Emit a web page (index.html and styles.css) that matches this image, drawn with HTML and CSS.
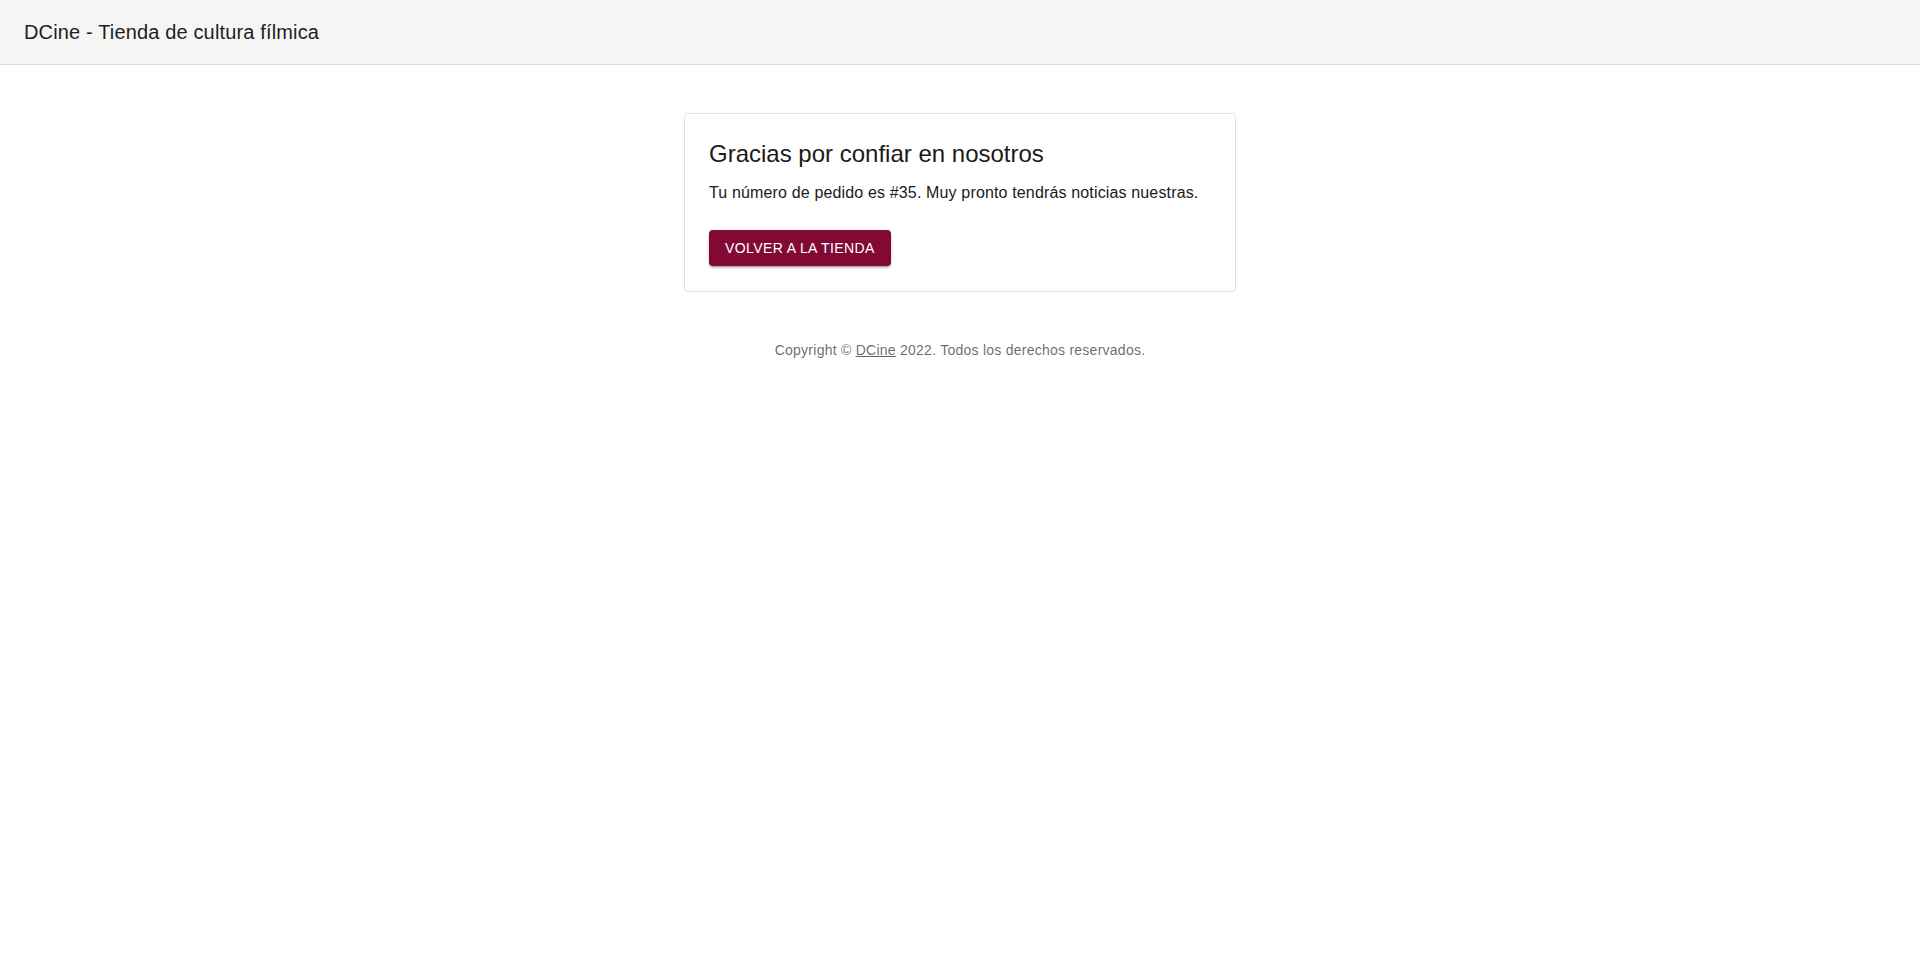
FILE: index.html
```html
<!DOCTYPE html>
<html lang="es">
<head>
<meta charset="utf-8">
<title>DCine - Tienda de cultura fílmica</title>
<link rel="stylesheet" href="styles.css">
</head>
<body>
<header class="topbar">
  <h1 class="brand">DCine - Tienda de cultura fílmica</h1>
</header>
<main class="main">
  <section class="card">
    <h2 class="card-title">Gracias por confiar en nosotros</h2>
    <p class="card-text">Tu número de pedido es #35. Muy pronto tendrás noticias nuestras.</p>
    <div class="card-actions">
      <a class="btn" href="#">Volver a la tienda</a>
    </div>
  </section>
  <footer class="footer">
    Copyright © <a class="footer-link" href="#">DCine</a> 2022. Todos los derechos reservados.
  </footer>
</main>
</body>
</html>
```

FILE: styles.css
```css
* { box-sizing: border-box; }
html, body {
  margin: 0;
  padding: 0;
  background: #ffffff;
  font-family: "Liberation Sans", Arial, sans-serif;
  color: rgba(0, 0, 0, 0.87);
}
.topbar {
  height: 65px;
  background: #f5f5f5;
  border-bottom: 1px solid #dcdcdc;
  display: flex;
  align-items: center;
  padding: 0 24px;
}
.brand {
  margin: 0;
  font-size: 20px;
  font-weight: 400;
  line-height: 32px;
  letter-spacing: 0.15px;
  color: #1e1e1e;
  padding-bottom: 1px;
}
.main {
  display: flex;
  flex-direction: column;
  align-items: center;
  padding-top: 48px;
}
.card {
  width: 552px;
  border: 1px solid #e0e0e0;
  border-radius: 4px;
  padding: 24px 24px 25px 24px;
  display: flex;
  flex-direction: column;
  align-items: flex-start;
}
.card-title {
  margin: 0 0 10.5px 0;
  font-size: 24px;
  font-weight: 400;
  line-height: 32px;
  color: #1a1a1a;
}
.card-text {
  margin: 0;
  font-size: 16px;
  line-height: 24px;
  letter-spacing: 0.15px;
  color: #1a1a1a;
}
.card-actions {
  margin-top: 25.5px;
  display: flex;
}
.btn {
  display: inline-flex;
  align-items: center;
  justify-content: center;
  height: 36px;
  padding: 0 16px;
  background: #820934;
  color: #ffffff;
  text-decoration: none;
  text-transform: uppercase;
  font-size: 14px;
  letter-spacing: 0.4px;
  border-radius: 4px;
  box-shadow: 0 3px 1px -2px rgba(0,0,0,0.2), 0 2px 2px 0 rgba(0,0,0,0.14), 0 1px 5px 0 rgba(0,0,0,0.12);
}
.footer {
  margin-top: 48px;
  font-size: 14px;
  line-height: 20px;
  letter-spacing: 0.25px;
  color: rgba(0, 0, 0, 0.6);
}
.footer-link {
  color: rgba(0, 0, 0, 0.6);
  text-decoration: underline;
}
```
